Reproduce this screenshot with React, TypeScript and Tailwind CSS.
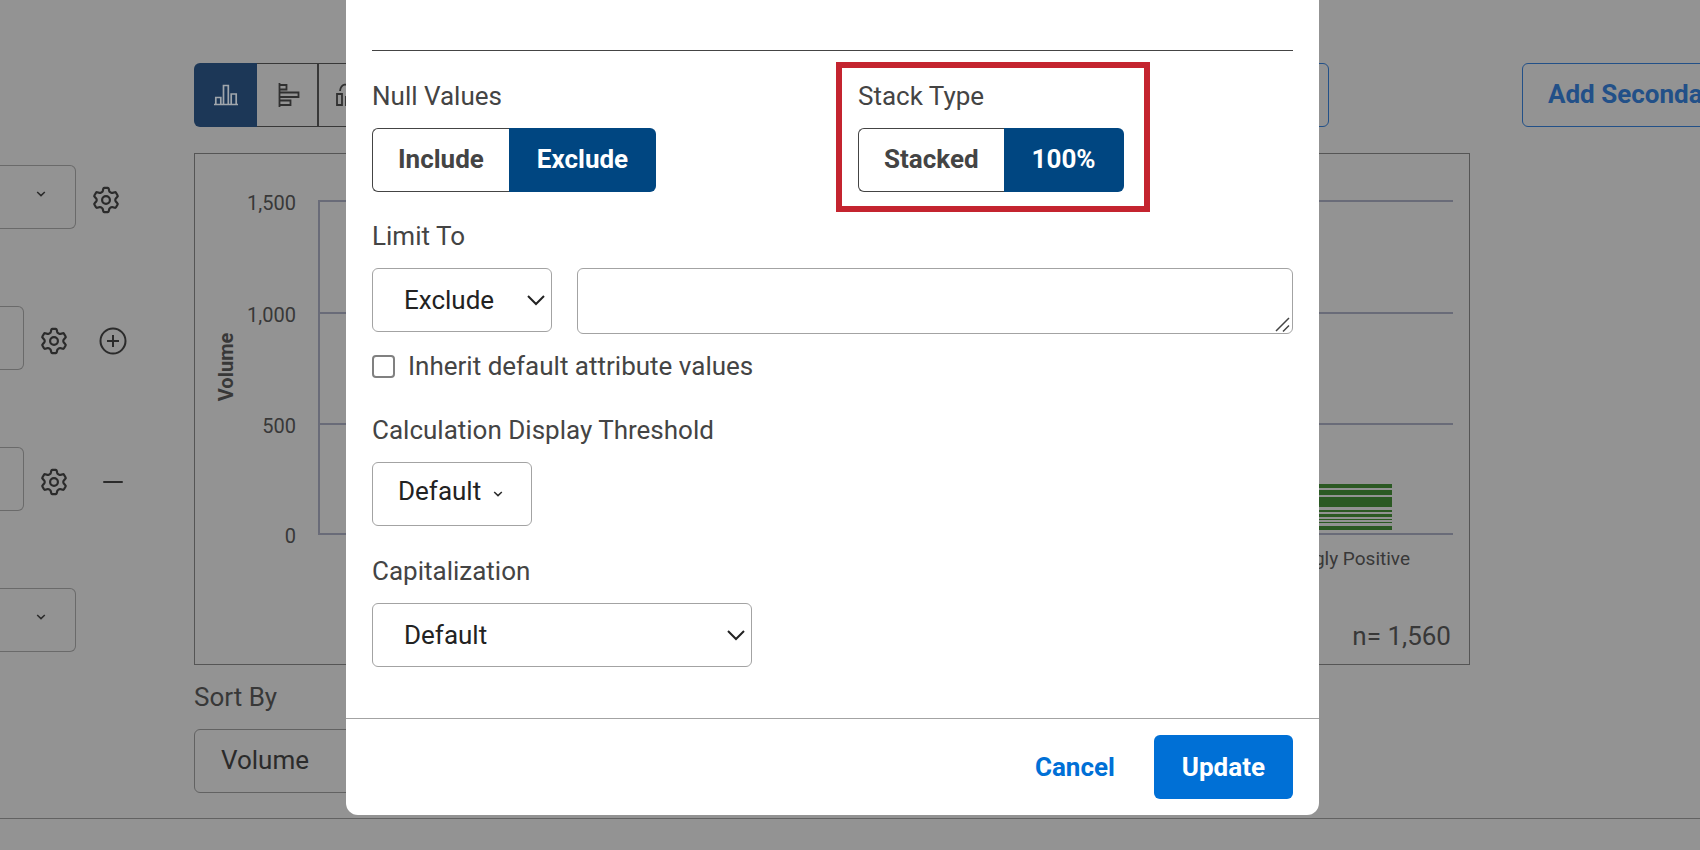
import type { ReactNode } from "react";

const control = "h-16 rounded-md border";

function Gear() {
  return (
    <svg viewBox="0 0 28 28" className="size-7" fill="none" stroke="#2b2b2b" strokeWidth="2.2" strokeLinejoin="round">
      <path d="M12.2 1.9h3.6q.7 0 .9.8l.6 2.4q.2.7.8 1l1.2.7q.6.3 1.2.1l2.3-.7q.8-.2 1.2.5l1.6 2.8q.4.7-.2 1.2l-1.6 1.8q-.5.5-.5 1.5t.5 1.5l1.6 1.8q.6.5.2 1.2L24 21.300q-.4.7-1.2.5l-2.3-.7q-.6-.2-1.2.1l-1.2.7q-.6.3-.8 1l-.6 2.400q-.2.8-.9.8h-3.600q-.7 0-.9-.8l-.6-2.400q-.2-.7-.8-1l-1.2-.7q-.6-.3-1.2-.1l-2.3.7q-.8.2-1.2-.5l-1.600-2.800q-.4-.7.2-1.200l1.600-1.800q.5-.5.5-1.500t-.5-1.500L2.600 10.700q-.6-.5-.2-1.200L4 6.700q.4-.7 1.200-.5l2.300.7q.6.200 1.200-.1l1.200-.7q.6-.3.8-1l.6-2.400q.2-.8.900-.8z" />
      <circle cx="14" cy="14" r="3.900" />
    </svg>
  );
}

function SmallChevron() {
  return (
    <svg viewBox="0 0 10 6" className="h-[6px] w-[10px] shrink-0" fill="none" stroke="#2b2b2b" strokeWidth="1.5">
      <path d="M1.2 1 5 4.600 8.800 1" />
    </svg>
  );
}

function LargeChevron() {
  return (
    <svg viewBox="0 0 18 12" className="pointer-events-none absolute top-[27px] right-[7px] h-3 w-[18px]" fill="none" stroke="#222" strokeWidth="2">
      <path d="M1 1 9 9 17 1" />
    </svg>
  );
}

function IconButton({ label, children }: { label: string; children: ReactNode }) {
  return (
    <button type="button" aria-label={label} className="flex h-[34px] w-7 items-end justify-center">
      {children}
    </button>
  );
}

function Sidebar() {
  return (
    <div className="flex w-[194px] shrink-0 flex-col gap-[77px] pt-[165px]">
      <div className="flex items-center gap-4">
        <button type="button" aria-label="Data source" className="flex h-16 w-[76px] items-center justify-end rounded-r-md border border-l-0 border-[#6a6a6a] pr-[29px] pb-[6px]">
          <SmallChevron />
        </button>
        <IconButton label="Data source settings"><Gear /></IconButton>
      </div>
      <div className="flex items-center gap-4">
        <div className="h-16 w-6 rounded-r-md border border-l-0 border-[#6a6a6a]" />
        <IconButton label="Primary grouping settings"><Gear /></IconButton>
        <div className="pl-[15px]">
          <IconButton label="Add grouping">
            <svg viewBox="0 0 28 28" className="size-7" fill="none" stroke="#2b2b2b" strokeWidth="2">
              <circle cx="14" cy="14" r="12.500" />
              <path d="M14 8v12M8 14h12" />
            </svg>
          </IconButton>
        </div>
      </div>
      <div className="flex items-center gap-4">
        <div className="h-16 w-6 rounded-r-md border border-l-0 border-[#6a6a6a]" />
        <IconButton label="Secondary grouping settings"><Gear /></IconButton>
        <div className="pl-[15px]">
          <IconButton label="Remove grouping">
            <svg viewBox="0 0 28 28" className="size-7" stroke="#2b2b2b" strokeWidth="2" strokeLinecap="round">
              <path d="M5 14h18" />
            </svg>
          </IconButton>
        </div>
      </div>
      <button type="button" aria-label="Calculation" className="flex h-16 w-[76px] items-center justify-end rounded-r-md border border-l-0 border-[#6a6a6a] pr-[29px] pb-[6px]">
        <SmallChevron />
      </button>
    </div>
  );
}

function ChartTypes() {
  return (
    <div className="flex h-16">
      <button type="button" aria-label="Vertical bars" className="flex w-[63px] items-center justify-center rounded-l-md bg-[#1c3757]">
        <svg viewBox="0 0 24 22" className="h-[22px] w-6" fill="none" stroke="#a0a6ac" strokeWidth="1.7">
          <path d="M0 20.500h24M1.800 20V13.500h5V20M9.500 20V1.500h4.800V20M17.200 20V10h5v10" />
        </svg>
      </button>
      <button type="button" aria-label="Horizontal bars" className="flex w-[62px] items-center justify-center border-y border-r-2 border-[#383838] pl-[3px]">
        <svg viewBox="0 0 22 24" className="h-6 w-[22px]" fill="none" stroke="#303030" strokeWidth="1.8">
          <path d="M1.500 0v24M1.500 2h7v4.500h-7M1.500 9.500h19v4.500h-19M1.500 17.500h11V22h-11" />
        </svg>
      </button>
      <button type="button" aria-label="Bars and line" className="flex w-[61px] items-center justify-center rounded-r-md border-y border-r border-[#383838]">
        <svg viewBox="0 0 26 24" className="h-6 w-[26px]" fill="none" stroke="#303030" strokeWidth="1.8">
          <path d="M1 11h5v11H1zM10 14h5v8h-5zM19 9h5v13h-5zM4 8C5 0 12 0 14 5s8 4 9-3" />
        </svg>
      </button>
    </div>
  );
}

const ticks = [
  { label: "1,500", y: 47 },
  { label: "1,000", y: 159 },
  { label: "500", y: 270 },
  { label: "0", y: 380 },
];

const segments = [
  [330, 4], [336, 5], [343, 10], [356, 2], [360, 3], [365, 1], [368, 1], [372, 4],
];

function Chart() {
  return (
    <svg viewBox="0 0 1274 510" className="block h-auto w-full" fill="#383838" fontSize="20">
      {ticks.map((t) => (
        <g key={t.label}>
          <text x="101" y={t.y + 9} textAnchor="end">{t.label}</text>
          <path d={`M124 ${t.y}H1258`} stroke="#696b78" strokeWidth="2" />
        </g>
      ))}
      <path d="M124 46V381" stroke="#696b78" strokeWidth="2" />
      <text transform="translate(38 213) rotate(-90)" textAnchor="middle" fontWeight="700">Volume</text>
      {segments.map(([y, h]) => (
        <rect key={y} x="1050" y={y} width="147" height={h} fill="#2b5923" />
      ))}
      <text x="1215" y="411" textAnchor="end" fontSize="19">Strongly Positive</text>
      <text x="1256" y="491" textAnchor="end" fontSize="26">n= 1,560</text>
    </svg>
  );
}

function Field({ label, htmlFor, children }: { label: string; htmlFor?: string; children: ReactNode }) {
  return (
    <div className="flex flex-col items-start gap-4">
      <label htmlFor={htmlFor} className="text-[#444]">{label}</label>
      {children}
    </div>
  );
}

function Toggle({ label, off, on }: { label: string; off: string; on: string }) {
  return (
    <div role="group" aria-label={label} className="flex h-16 font-bold">
      <button type="button" aria-pressed="false" className="rounded-l-md border border-r-0 border-[#444] px-[25px] pb-[3px] text-[#444]">{off}</button>
      <button type="button" aria-pressed="true" className="rounded-r-md bg-[#004681] px-7 pb-[3px] text-white">{on}</button>
    </div>
  );
}

function OptionsDialog() {
  return (
    <div role="dialog" aria-label="Grouping options" className="w-full max-w-[973px] rounded-b-xl bg-white">
      <div className="px-[26px] pt-[50px] pb-[51px]">
        <hr className="border-[#444]" />
        <div className="grid grid-cols-[486px_1fr] pt-[29px]">
          <Field label="Null Values">
            <Toggle label="Null Values" off="Include" on="Exclude" />
          </Field>
          <div className="relative">
            <Field label="Stack Type">
              <Toggle label="Stack Type" off="Stacked" on="100%" />
            </Field>
            <div className="pointer-events-none absolute -top-[18px] -left-[22px] h-[150px] w-[314px] border-[6px] border-[#c4242f]" />
          </div>
        </div>
        <div className="pt-7">
          <Field label="Limit To" htmlFor="limit">
            <div className="flex w-full gap-[25px]">
              <div className="relative h-16 w-[180px] shrink-0">
                <select id="limit" className={`${control} w-full appearance-none border-[#a3a3a3] bg-white pl-[31px] text-[#222]`}>
                  <option>Exclude</option>
                </select>
                <LargeChevron />
              </div>
              <div className="relative h-[66px] grow">
                <textarea aria-label="Values" className="block h-full w-full resize-none rounded-md border border-[#a3a3a3] bg-white p-3" />
                <svg viewBox="0 0 16 16" className="pointer-events-none absolute right-[2px] bottom-[1px] size-4" stroke="#444" strokeWidth="1.5">
                  <path d="M1 14 14 1M8 14.500 14 8.500" />
                </svg>
              </div>
            </div>
          </Field>
          <label className="mt-4 flex items-center gap-[13px] text-[#444]">
            <input type="checkbox" className="size-[23px] appearance-none rounded border-2 border-[#808080] bg-white" />
            Inherit default attribute values
          </label>
        </div>
        <div className="flex flex-col gap-[29px] pt-8">
          <Field label="Calculation Display Threshold" htmlFor="threshold">
            <button id="threshold" type="button" className={`${control} flex items-center gap-3 border-[#a3a3a3] pr-7 pl-[25px] text-[#222]`}>
              <span className="pb-[6px]">Default</span>
              <SmallChevron />
            </button>
          </Field>
          <Field label="Capitalization" htmlFor="caps">
            <div className="relative w-[380px]">
              <select id="caps" className={`${control} w-full appearance-none border-[#a3a3a3] bg-white pl-[31px] text-[#222]`}>
                <option>Default</option>
              </select>
              <LargeChevron />
            </div>
          </Field>
        </div>
      </div>
      <div className="flex justify-end gap-3 border-t border-[#a3a3a3] px-[26px] py-4 font-bold">
        <button type="button" className="h-16 px-[27px] text-[#0070d6]">Cancel</button>
        <button type="button" className="h-16 rounded-md bg-[#0070d6] px-7 text-white">Update</button>
      </div>
    </div>
  );
}

export default function App() {
  return (
    <div className="relative min-h-screen overflow-hidden bg-[#939393] font-[Roboto,sans-serif] text-[26px] leading-8">
      <div className="flex border-b border-[#626262] pb-[25px]">
        <Sidebar />
        <main className="min-w-0 grow pt-[63px]">
          <div className="flex justify-between pr-[141px]">
            <ChartTypes />
            <button type="button" className="h-16 w-40 rounded-md border border-[#225088]" aria-label="Chart options" />
          </div>
          <div className="mt-[26px] border border-[#555]">
            <Chart />
          </div>
          <div className="mt-4 flex flex-col items-start gap-4 text-[#383838]">
            <label htmlFor="sort">Sort By</label>
            <select id="sort" className={`${control} w-[380px] appearance-none border-[#626262] pb-[2px] pl-[26px] text-[#2b2b2b]`}>
              <option>Volume</option>
            </select>
          </div>
        </main>
        <div className="w-[230px] shrink-0 overflow-hidden pt-[63px] pl-[52px]">
          <button type="button" className="h-16 rounded-md border border-[#225088] px-[25px] pb-[3px] font-bold whitespace-nowrap text-[#225088]">Add Secondary Axis</button>
        </div>
      </div>
      <div className="absolute inset-x-0 top-0 flex justify-center pr-[35px]">
        <OptionsDialog />
      </div>
    </div>
  );
}
